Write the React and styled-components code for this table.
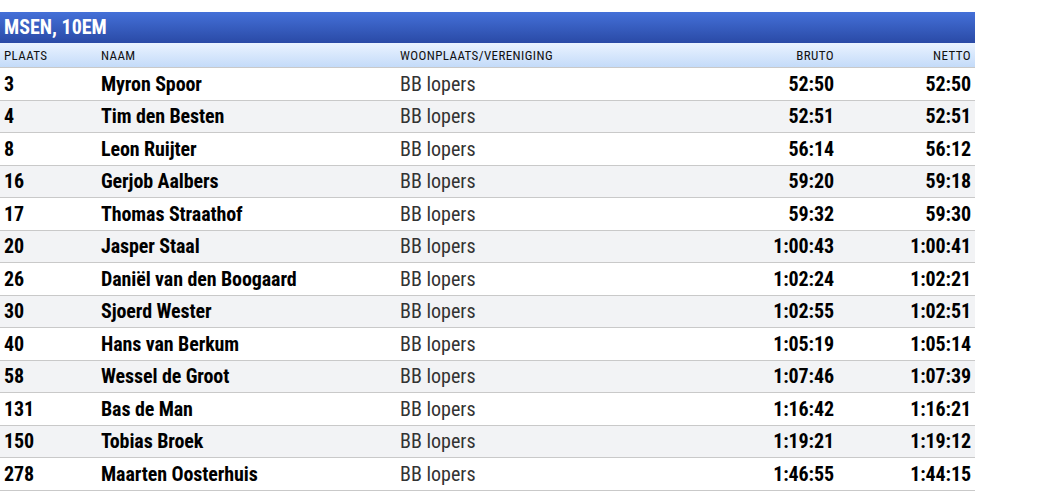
import React from "react";
import styled, { createGlobalStyle } from "styled-components";

const GlobalStyle = createGlobalStyle`
  body {
    margin: 0;
    background: #fff;
    font-family: "Roboto Condensed", Roboto, "Liberation Sans", sans-serif;
  }
`;

const results = [
  ["3", "Myron Spoor", "BB lopers", "52:50", "52:50"],
  ["4", "Tim den Besten", "BB lopers", "52:51", "52:51"],
  ["8", "Leon Ruijter", "BB lopers", "56:14", "56:12"],
  ["16", "Gerjob Aalbers", "BB lopers", "59:20", "59:18"],
  ["17", "Thomas Straathof", "BB lopers", "59:32", "59:30"],
  ["20", "Jasper Staal", "BB lopers", "1:00:43", "1:00:41"],
  ["26", "Daniël van den Boogaard", "BB lopers", "1:02:24", "1:02:21"],
  ["30", "Sjoerd Wester", "BB lopers", "1:02:55", "1:02:51"],
  ["40", "Hans van Berkum", "BB lopers", "1:05:19", "1:05:14"],
  ["58", "Wessel de Groot", "BB lopers", "1:07:46", "1:07:39"],
  ["131", "Bas de Man", "BB lopers", "1:16:42", "1:16:21"],
  ["150", "Tobias Broek", "BB lopers", "1:19:21", "1:19:12"],
  ["278", "Maarten Oosterhuis", "BB lopers", "1:46:55", "1:44:15"],
];

const App = () => {
  return (
    <>
      <GlobalStyle />
      <Wrapper>
        <Title>MSEN, 10EM</Title>
        <HeadRow>
          <HeadCell>PLAATS</HeadCell>
          <HeadCell>NAAM</HeadCell>
          <HeadCell>WOONPLAATS/VERENIGING</HeadCell>
          <HeadCell $right>BRUTO</HeadCell>
          <HeadCell $right>NETTO</HeadCell>
        </HeadRow>
        {results.map((r, i) => (
          <Row key={r[0]} $alt={i % 2 === 1}>
            <Cell $bold>{r[0]}</Cell>
            <Cell $bold>{r[1]}</Cell>
            <Cell>{r[2]}</Cell>
            <Cell $bold $right>{r[3]}</Cell>
            <Cell $bold $right>{r[4]}</Cell>
          </Row>
        ))}
      </Wrapper>
    </>
  );
};

export default App;

const Wrapper = styled.div`
  width: 975px;
  margin-top: 12px;
`;

const Title = styled.div`
  height: 31px;
  line-height: 31px;
  padding-left: 4px;
  background: linear-gradient(to bottom, #4470d8, #2a4aa6);
  color: #fff;
  font-size: 20px;
  font-weight: 700;
  font-stretch: condensed;
`;

const grid = `
  display: grid;
  grid-template-columns: 97px 299px 302px 140px 137px;
  align-items: center;
`;

const HeadRow = styled.div`
  ${grid}
  height: 24px;
  background: linear-gradient(to bottom, #eaf3ff, #c4dbf9);
  border-bottom: 1px solid #c9c9c9;
`;

const HeadCell = styled.div`
  padding: 0 4px;
  white-space: nowrap;
  font-size: 13px;
  color: #111;
  font-stretch: condensed;
  letter-spacing: 0.4px;
  text-align: ${(p) => (p.$right ? "right" : "left")};
`;

const Row = styled.div`
  ${grid}
  height: 31.5px;
  background: ${(p) => (p.$alt ? "#f2f3f5" : "#fff")};
  border-bottom: 1px solid #c9c9c9;
  font-size: 20px;
  color: #333;
`;

const Cell = styled.div`
  padding: 0 4px;
  white-space: nowrap;
  font-weight: ${(p) => (p.$bold ? 700 : 400)};
  color: ${(p) => (p.$bold ? "#000" : "inherit")};
  text-align: ${(p) => (p.$right ? "right" : "left")};
  font-stretch: condensed;
  letter-spacing: ${(p) => (p.$bold ? "-0.1px" : "0")};
`;
